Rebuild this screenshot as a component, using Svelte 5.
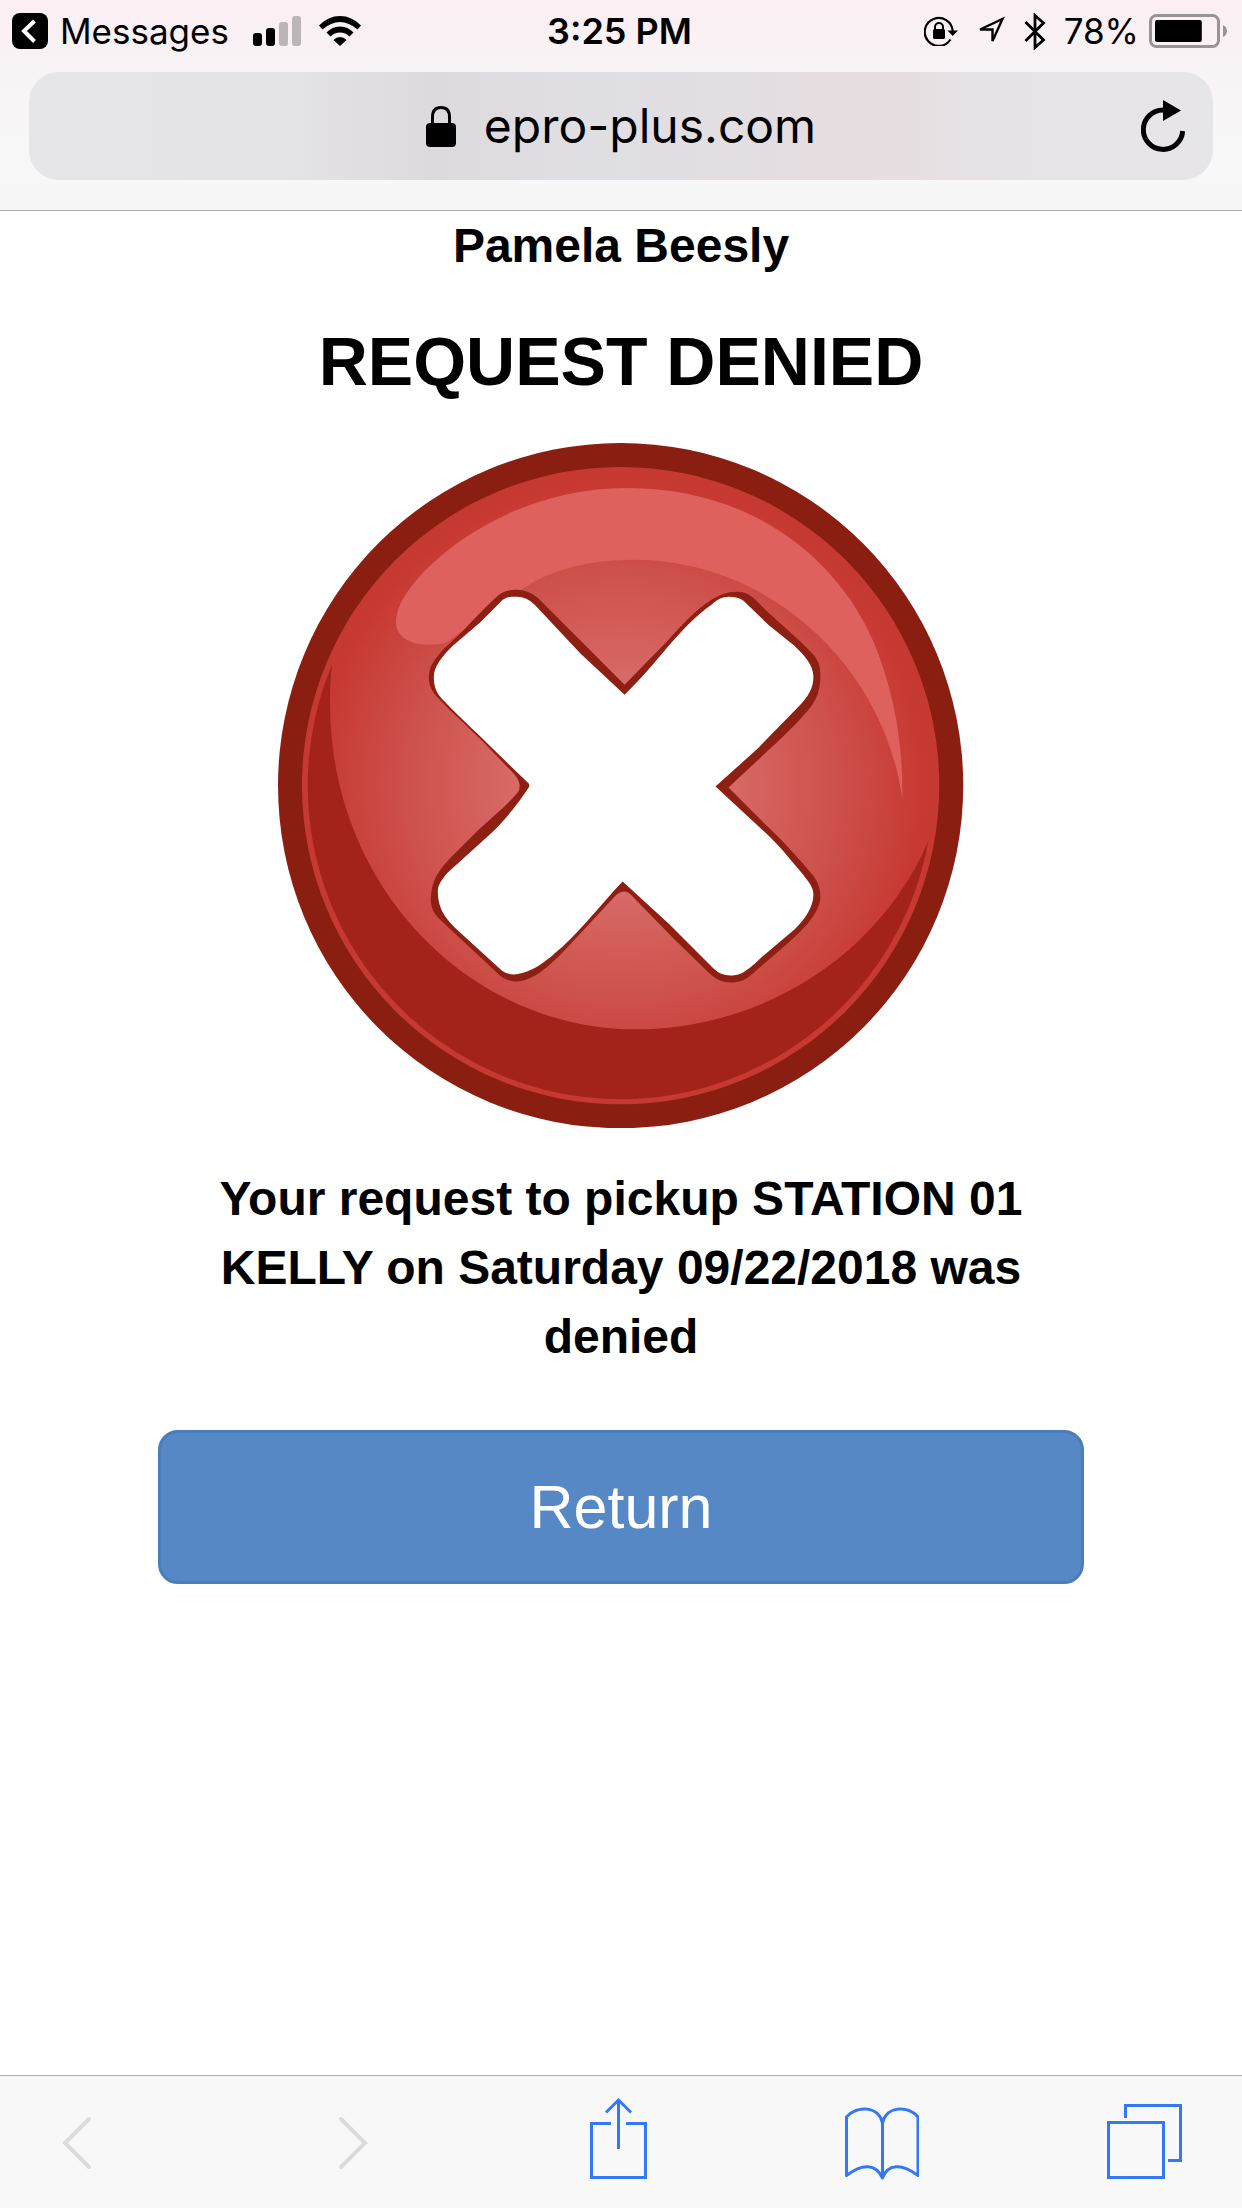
<script>
	let user = 'Pamela Beesly';
	let station = 'STATION 01 KELLY';
	let date = 'Saturday 09/22/2018';
	let host = 'epro-plus.com';
	let battery = 78;
</script>

<div class="screen">
	<header>
		<div class="status">
			<div class="status-left">
				<a class="back-app" href="#messages">
					<svg width="36" height="36" viewBox="0 0 36 36">
						<rect width="36" height="36" rx="8" />
						<path d="M22.5 8 L12 18 L22.5 28.5" fill="none" stroke="#fff" stroke-width="4" />
					</svg>
					<span>Messages</span>
				</a>
				<svg class="signal" width="48" height="30" viewBox="0 0 48 30">
					<rect x="0" y="17" width="9" height="13" rx="3" />
					<rect x="13" y="12" width="9" height="18" rx="3" />
					<rect x="26" y="6" width="9" height="24" rx="3" fill="#bab5b7" />
					<rect x="39" y="0" width="9" height="30" rx="3" fill="#bab5b7" />
				</svg>
				<svg class="wifi" width="42" height="30" viewBox="0 0 42 30">
					<path d="M0 9.5 Q9 0 21 0 T42 9.5 L38.5 13.5 Q30 6 21 6 T3.5 13.5 Z" />
					<path d="M7.5 16.5 Q13 10.5 21 10.5 T34.5 16.5 L30.5 20.5 Q26.5 16.5 21 16.5 T11.5 20.5 Z" />
					<path d="M14.5 24 Q17.5 21 21 21 T27.5 24 L21 30 Z" />
				</svg>
			</div>
			<time>3:25 PM</time>
			<div class="status-right">
				<!-- rotation lock -->
				<svg class="rotation" width="34" height="30" viewBox="0 0 34 30">
					<path d="M26.5 23.5 A14 14 0 1 1 28.7 15" fill="none" stroke="#000" stroke-width="2.2" />
					<path d="M23.5 14.5 H34 L28.7 20 Z" />
					<rect x="9" y="13" width="12" height="10" rx="1.5" />
					<path d="M11 14 V11 A4 4 0 0 1 19 11 V14" fill="none" stroke="#000" stroke-width="2" />
				</svg>
				<svg class="location" width="30" height="30" viewBox="0 0 30 30">
					<path d="M4 13.5 L26.5 3 L16.5 25 V13.5 Z" fill="none" stroke="#000" stroke-width="2.4" />
				</svg>
				<svg class="bluetooth" width="22" height="37" viewBox="0 0 22 37">
					<path d="M1.5 9 L19.5 27 L11 34.500 V2.500 L19.5 10 L1.5 28" fill="none" stroke="#000" stroke-width="2.8" />
				</svg>
				<span>{battery}%</span>
				<svg class="battery" width="78" height="34" viewBox="0 0 78 34">
					<rect x="1.5" y="1.5" width="68" height="31" rx="6" fill="none" stroke="#989496" stroke-width="3" />
					<path d="M74 11 Q78 13 78 17 T74 23 Z" fill="#989496" />
					<rect x="6" y="6" width={60 * battery / 100} height="22" rx="2" />
				</svg>
			</div>
		</div>

		<div class="address">
			<div class="host">
				<svg width="30" height="41" viewBox="0 0 30 41">
					<rect y="17" width="30" height="24" rx="4" />
					<path d="M6.5 18 V11 Q6.5 1.5 15 1.5 T23.5 11 V18" fill="none" stroke="#000" stroke-width="3" />
				</svg>
				<span>{host}</span>
			</div>
			<button class="reload" aria-label="Reload">
				<svg width="44" height="52" viewBox="0 0 44 52">
					<path d="M22.5 10 A19.7 19.7 0 1 0 41.7 31" fill="none" stroke="#000" stroke-width="5" />
					<path d="M22 0 L40 10.5 L22 21 Z" />
				</svg>
			</button>
		</div>
	</header>

	<main>
		<h2>{user}</h2>
		<h1>REQUEST DENIED</h1>

		<svg class="denied" viewBox="0 0 686 686" role="img" aria-label="Denied">
			<defs>
				<radialGradient id="face" cx="343" cy="343" r="319" gradientUnits="userSpaceOnUse">
					<stop offset="0" stop-color="#df7a79" />
					<stop offset="0.3" stop-color="#d86c6a" />
					<stop offset="0.66" stop-color="#ce524c" />
					<stop offset="0.94" stop-color="#c73a33" />
					<stop offset="1" stop-color="#c63932" />
				</radialGradient>
			</defs>
			<circle cx="343" cy="343" r="343" fill="#8a1f11" />
			<circle cx="343" cy="343" r="319" fill="url(#face)" />
			<!-- lower shadow -->
			<path
				d="M54 222 A314 314 0 0 0 343 657 A314 314 0 0 0 651 399 C601 514 484 587 358 587 C184 587 33 428 54 222 Z"
				fill="#a3231b"
			/>
			<!-- upper highlight -->
			<path
				d="M119 172 C126 133 221 45 349 45 C477 45 562 118 597 201 C618 252 626 306 625 357 C608 226 494 117 356 117 C302 117 262 132 240 150 L168 200 C136 207 113 195 119 172 Z"
				fill="#de615d"
			/>
			<!-- cross edge, then the cross -->
			<path
				d="M239 147 C231 147 226 148 220 153 C201 170 185 190 166 206 C156 217 151 225 151 234 C151 243 154 249 161 256 C177 273 195 288 212 306 L237 332 Q245 342 240 350 C229 363 215 374 200 388 L174 414 C160 428 153 440 153 457 C153 465 156 471 161 476 L219 530 Q226 538 237 539 C259 540 281 514 299 495 L338 453 Q347 445 354 453 L395 495 L432 531 Q441 540 453 540 C462 540 467 538 473 533 L509 502 C524 489 543 471 543 454 C543 443 538 435 533 430 C518 412 504 397 487 381 L451 345 L483 315 C499 300 515 286 531 267 C539 258 543 247 543 234 C543 224 542 219 535 211 C518 192 497 177 478 157 Q470 149 460 149 C450 149 442 152 434 157 C418 167 405 182 391 197 L347 242 L304 199 L260 155 Q250 147 239 147 Z"
				fill="#8d2013"
			/>
			<path
				d="M239 154 C233 154 230 154 225 157 L202 180 L175 203 C164 214 156 224 156 234 C156 243 158 250 165 257 C180 273 195 286 212 303 L251 341 Q252 343 251 345 C241 360 228 377 212 392 L170 430 C163 438 160 443 160 449 C160 468 170 478 179 487 L224 528 Q229 532 236 532 C257 530 271 516 285 504 C306 485 324 461 345 439 L391 481 L436 526 Q443 533 453 533 C463 533 468 530 485 514 L517 487 C526 478 536 466 536 452 C536 444 531 438 512 416 C502 403 490 392 478 381 L438 344 L480 306 L521 264 C531 254 536 245 536 234 C536 222 527 213 517 203 L492 183 L466 158 Q461 154 451 154 C445 154 439 157 434 162 C402 184 378 223 347 252 L303 211 L257 162 Q249 154 239 154 Z"
				fill="#fff"
			/>
		</svg>

		<p>Your request to pickup {station} on {date} was denied</p>
		<button class="return">Return</button>
	</main>

	<nav class="toolbar">
		<button aria-label="Back" disabled>
			<svg viewBox="0 0 77 84"><path d="M39 22 L15 46 L39 70" /></svg>
		</button>
		<button aria-label="Forward" disabled>
			<svg viewBox="0 0 77 84"><path d="M27 22 L51 46 L27 70" /></svg>
		</button>
		<button aria-label="Share">
			<svg viewBox="0 0 77 84">
				<path d="M33 26.5 H13.5 V80.5 H67.5 V26.5 H48" />
				<path d="M40.5 52 V3 M28 15.5 L40.5 3 L53 15.5" />
			</svg>
		</button>
		<button aria-label="Bookmarks">
			<svg viewBox="0 0 77 84">
				<path
					stroke-linejoin="round"
					d="M40.5 81 V26 C37 9 15 8 4.5 20 V78.5 C21 66 34 67 40.5 81 C46 67 59 66 76 78.500 V20 C66 8 44 9 40.5 26"
				/>
			</svg>
		</button>
		<button aria-label="Tabs">
			<svg viewBox="0 0 77 84">
				<rect x="2.5" y="25.5" width="55" height="55" />
				<path d="M19.5 21 V8.5 H74.5 V63.5 H62" />
			</svg>
		</button>
	</nav>
</div>

<style>
	:global(body) {
		margin: 0;
		background: #fff;
	}

	.screen {
		display: flex;
		flex-direction: column;
		min-height: 100vh;
		color: #000;
		font-family: 'Liberation Sans', Arial, sans-serif;
	}

	svg {
		display: block;
		flex-shrink: 0;
	}

	button {
		padding: 0;
		border: 0;
		background: none;
		font-family: inherit;
	}

	header {
		padding-bottom: 30px;
		border-bottom: 1px solid #b0aeb0;
		background: linear-gradient(#fbeef3, #f8f4f6 35%, #f8f8f8 70%, #f7f7f7);
		font-family: Inter, sans-serif;
	}

	.status,
	.address {
		display: grid;
		grid-template-columns: 1fr auto 1fr;
		align-items: center;
	}

	.status {
		padding: 10px 15px 20px 12px;
		font-size: 35px;
		line-height: 42px;
	}

	.status-left,
	.status-right,
	.back-app,
	.host {
		display: flex;
		align-items: center;
	}

	.status-left,
	.status-right {
		height: 42px;
	}

	.status-right {
		justify-content: flex-end;
	}

	.back-app {
		gap: 12px;
		color: inherit;
		text-decoration: none;
	}

	.signal {
		margin-left: 24px;
	}

	.wifi {
		margin-left: 18px;
	}

	.location {
		margin: 0 18px;
	}

	.bluetooth {
		margin-right: 18px;
	}

	.battery {
		margin-left: 10px;
	}

	time {
		font-size: 36px;
		font-weight: 600;
	}

	.address {
		height: 108px;
		margin: 0 29px;
		padding: 0 28px;
		border-radius: 30px;
		background: linear-gradient(90deg, #e6e5e8, #e4e3e6 22%, #dddadd 34%, #e0dfe4 50%, #e6dde0 70%, #e6e4e7 84%, #e6e5e8);
		font-size: 48px;
		line-height: 60px;
	}

	.host {
		grid-column: 2;
		gap: 28px;
	}

	.reload {
		justify-self: end;
	}

	main {
		display: flex;
		flex: 1;
		flex-direction: column;
		align-items: center;
		padding: 0 158px 48px;
		text-align: center;
	}

	h1,
	h2,
	p {
		margin: 0;
		font-weight: bold;
	}

	h2,
	p {
		font-size: 48px;
		line-height: 69px;
	}

	h1 {
		margin: 43px 0 44px;
		font-size: 68px;
		line-height: 76px;
	}

	.denied {
		width: 74%;
	}

	p {
		margin: 36px 0 59px;
	}

	.return {
		box-sizing: border-box;
		width: 100%;
		height: 154px;
		border: 3px solid #4a7ebb;
		border-radius: 20px;
		background: #5588c5;
		color: #fff;
		font-size: 61px;
		line-height: 80px;
	}

	.toolbar {
		display: flex;
		justify-content: space-between;
		padding: 21px 59px 27px 50px;
		border-top: 1px solid #adadad;
		background: #f8f8f8;
	}

	.toolbar svg {
		width: 77px;
		height: 84px;
		fill: none;
		stroke: #3478f6;
		stroke-width: 3;
	}

	.toolbar button:disabled svg {
		stroke: #dcdcdc;
		stroke-width: 4;
		stroke-linecap: round;
	}
</style>
